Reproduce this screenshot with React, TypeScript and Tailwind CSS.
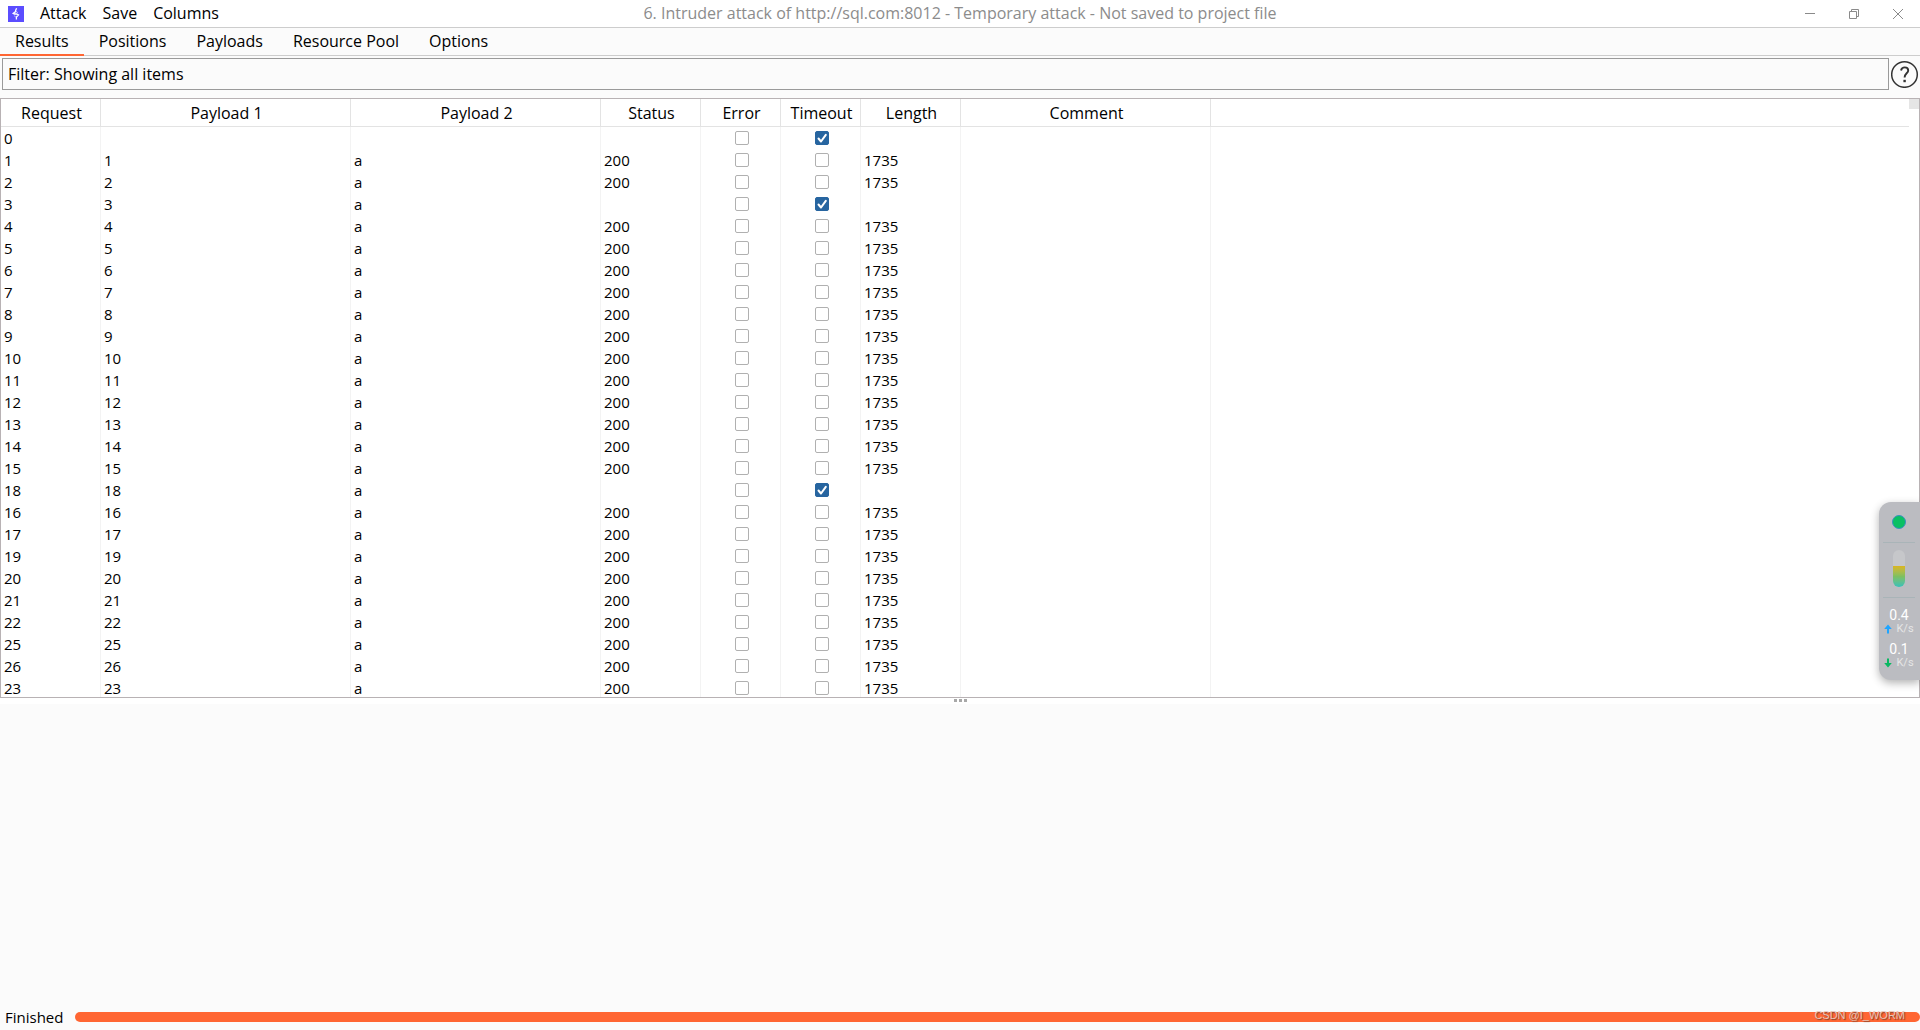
type Row = { id: number; sent: boolean; timeout: boolean };

const order = [0, 1, 2, 3, 4, 5, 6, 7, 8, 9, 10, 11, 12, 13, 14, 15, 18, 16, 17, 19, 20, 21, 22, 25, 26, 23];
const timedOut = [0, 3, 18];
const rows: Row[] = order.map((id) => ({ id, sent: id > 0, timeout: timedOut.includes(id) }));

const columns = [
  { name: 'Request', width: 'w-[100px]' },
  { name: 'Payload 1', width: 'w-[250px]' },
  { name: 'Payload 2', width: 'w-[250px]' },
  { name: 'Status', width: 'w-[100px]' },
  { name: 'Error', width: 'w-[80px]' },
  { name: 'Timeout', width: 'w-[80px]' },
  { name: 'Length', width: 'w-[100px]' },
  { name: 'Comment', width: 'w-[250px]' },
];

const cell = 'h-[22px] border-r border-[#f3f3f3] pl-[3px] whitespace-nowrap';

function Check({ label, checked }: { label: string; checked: boolean }) {
  return (
    <span className="grid place-items-center">
      <input
        type="checkbox"
        aria-label={label}
        defaultChecked={checked}
        className="peer col-start-1 row-start-1 size-[14px] appearance-none rounded-[2px] border border-[#b0b0b0] bg-white checked:border-[#2765a0] checked:bg-[#2765a0]"
      />
      <svg
        viewBox="0 0 14 14"
        className="pointer-events-none invisible col-start-1 row-start-1 size-[14px] peer-checked:visible"
        fill="none"
        stroke="#fff"
        strokeWidth="2"
        strokeLinecap="round"
        strokeLinejoin="round"
      >
        <path d="M3.5 7.5 6 10.5 10.8 3.8" />
      </svg>
    </span>
  );
}

function TitleBar() {
  return (
    <header className="grid h-7 grid-cols-[1fr_auto_1fr] items-center border-b border-[#cdcdcd] bg-white text-[16px]">
      <div className="flex items-center gap-4 pl-2">
        <svg viewBox="0 0 16 16" className="size-4">
          <rect width="16" height="16" fill="#5b4dff" />
          <path
            d="M8.6 2.2 7.6 4.4V5.6L5.2 7.4 6.4 8H8.6L10.4 9 8.4 11V13.4"
            fill="none"
            stroke="#fff"
            strokeWidth="1.3"
          />
          <path d="M8 5.4 9.8 6.6M7.8 11 6.2 9.8" stroke="#c9c4ff" strokeWidth="1" />
        </svg>
        <nav className="flex gap-4 pb-0.5">
          <button>Attack</button>
          <button>Save</button>
          <button>Columns</button>
        </nav>
      </div>
      <h1 className="pb-0.5 text-[#8c8c8c]">
        6. Intruder attack of http://sql.com:8012 - Temporary attack - Not saved to project file
      </h1>
      <div className="flex justify-end">
        <button aria-label="Minimize" className="grid h-6 w-11 place-items-center">
          <svg viewBox="0 0 10 10" className="size-[10px]" fill="none" stroke="#8a8a8a">
            <path d="M0 4.5H10" />
          </svg>
        </button>
        <button aria-label="Restore" className="grid h-6 w-11 place-items-center">
          <svg viewBox="0 0 10 10" className="size-[10px]" fill="none" stroke="#8a8a8a">
            <path d="M.5 2.5H7.5V9.5H.5ZM2.5 2.5V.5H9.5V7.5H7.5" />
          </svg>
        </button>
        <button aria-label="Close" className="grid h-6 w-11 place-items-center">
          <svg viewBox="0 0 10 10" className="size-[10px]" fill="none" stroke="#8a8a8a">
            <path d="M0 0 10 10M10 0 0 10" />
          </svg>
        </button>
      </div>
    </header>
  );
}

function Tabs() {
  const tabs = ['Results', 'Positions', 'Payloads', 'Resource Pool', 'Options'];
  return (
    <nav className="flex h-7 border-b border-[#cdcdcd] text-[16px]" role="tablist">
      {tabs.map((t, i) => (
        <button
          key={t}
          role="tab"
          aria-selected={i === 0}
          className="h-7 border-b-2 border-transparent px-[15px] leading-6 aria-selected:border-[#ff6633]"
        >
          {t}
        </button>
      ))}
    </nav>
  );
}

function Results() {
  return (
    <section className="min-h-0 flex-[2_1_0%] overflow-hidden border border-[#b8b2b4] bg-white">
      <div className="flex">
        <table className="w-full table-fixed border-separate border-spacing-0">
          <thead>
            <tr>
              {columns.map((c) => (
                <th
                  key={c.name}
                  className={`${c.width} h-7 border-r border-b border-[#e3e3e3] pt-px pb-0 pl-0.5 text-[16px] font-normal`}
                >
                  {c.name}
                </th>
              ))}
              <td className="border-b border-[#e3e3e3]" />
            </tr>
          </thead>
          <tbody>
            {rows.map((r) => {
              const answered = r.sent && !r.timeout;
              return (
                <tr key={r.id}>
                  <td className={cell}>{r.id}</td>
                  <td className={cell}>{r.sent ? r.id : ''}</td>
                  <td className={cell}>{r.sent ? 'a' : ''}</td>
                  <td className={cell}>{answered ? 200 : ''}</td>
                  <td className={cell}>
                    <Check label={`Error, request ${r.id}`} checked={false} />
                  </td>
                  <td className={cell}>
                    <Check label={`Timeout, request ${r.id}`} checked={r.timeout} />
                  </td>
                  <td className={cell}>{answered ? 1735 : ''}</td>
                  <td className={cell} />
                  <td />
                </tr>
              );
            })}
          </tbody>
        </table>
        <div className="w-[10px] shrink-0">
          <div className="h-[10px] bg-[#e5e5e5]" />
        </div>
      </div>
    </section>
  );
}

function Rate({ value, up }: { value: string; up: boolean }) {
  return (
    <div className="flex h-[34px] flex-col items-center font-['Roboto',sans-serif]">
      <span className="text-[14px] leading-4 text-white">{value}</span>
      <span className="flex items-center gap-1 text-[11px] leading-[12px] text-[#e6e6e6]">
        <svg
          viewBox="0 0 8 10"
          className="h-[10px] w-2"
          fill={up ? '#1fa5ff' : '#09b862'}
        >
          <path d={up ? 'M4 .5 7.8 5H5V9.5H3V5H.2Z' : 'M4 9.5 7.8 5H5V.5H3V5H.2Z'} />
        </svg>
        K/s
      </span>
    </div>
  );
}

function Monitor() {
  return (
    <aside className="absolute top-[502px] right-0 flex h-[178px] w-[41px] flex-col items-center rounded-l-xl bg-[#bbbcc1] pr-px shadow-[0_3px_8px_rgba(0,0,0,0.3)]">
      <div className="mt-[13px] size-[14px] rounded-full border border-[#3c8fc0] bg-[#09c063]" />
      <div className="mt-[13px] h-px w-8 bg-[#a9b4b8]" />
      <div className="mt-[7px] flex h-[37px] w-3 flex-col justify-end overflow-hidden rounded-full bg-[#c6c7ca]">
        <div className="h-[21px] bg-linear-to-b from-[#d9b51c] via-[#7dc060] to-[#35c0b8]" />
      </div>
      <div className="mt-[10px] mb-[9px] h-px w-8 bg-[#a9b4b8]" />
      <Rate value="0.4" up />
      <Rate value="0.1" up={false} />
    </aside>
  );
}

export default function App() {
  return (
    <div className="relative flex h-screen flex-col overflow-hidden bg-[#fbfbfb] font-['Open_Sans','Noto_Sans',sans-serif] text-[15px] leading-[22px] text-black">
      <TitleBar />
      <Tabs />
      <div className="mt-0.5 mb-2 flex h-8 items-stretch gap-0.5 pr-px pl-0.5">
        <button className="flex flex-1 items-center border border-[#9a9a9a] pl-[5px] text-left text-[16px]">
          Filter: Showing all items
        </button>
        <button aria-label="Help" className="grid w-7 place-items-center">
          <svg viewBox="0 0 28 28" className="size-7" fill="none" stroke="#333">
            <circle cx="13.5" cy="14.5" r="12.8" strokeWidth="1.5" />
            <path d="M10 10.4C10.6 8 12 7.4 13.8 7.4 15.8 7.4 17.2 8.6 17.2 10.4 17.2 13.2 13.6 13.4 13.6 17.4" strokeWidth="1.9" />
            <path d="M13.6 19.8V22.2" strokeWidth="2.4" />
          </svg>
        </button>
      </div>
      <Results />
      <div className="flex h-1.5 shrink-0 justify-center gap-0.5 bg-white pt-px" role="separator">
        <span className="size-[3px] bg-[#a8a8a8]" />
        <span className="size-[3px] bg-[#a8a8a8]" />
        <span className="size-[3px] bg-[#a8a8a8]" />
      </div>
      <div className="flex-[1_1_0%]" />
      <footer className="relative flex h-[27px] items-center gap-3 pt-px pl-[5px]">
        <span id="progress-label">Finished</span>
        <div
          role="progressbar"
          aria-labelledby="progress-label"
          aria-valuenow={100}
          className="h-[10px] flex-1 rounded-full bg-[#ff6633]"
        />
        <span className="absolute right-[15px] bottom-2 font-['Liberation_Sans',sans-serif] text-[11px] leading-[14px] text-[#e8c4b8] [text-shadow:1px_1px_1px_#80402a]">
          CSDN @I_WORM
        </span>
      </footer>
      <Monitor />
    </div>
  );
}
